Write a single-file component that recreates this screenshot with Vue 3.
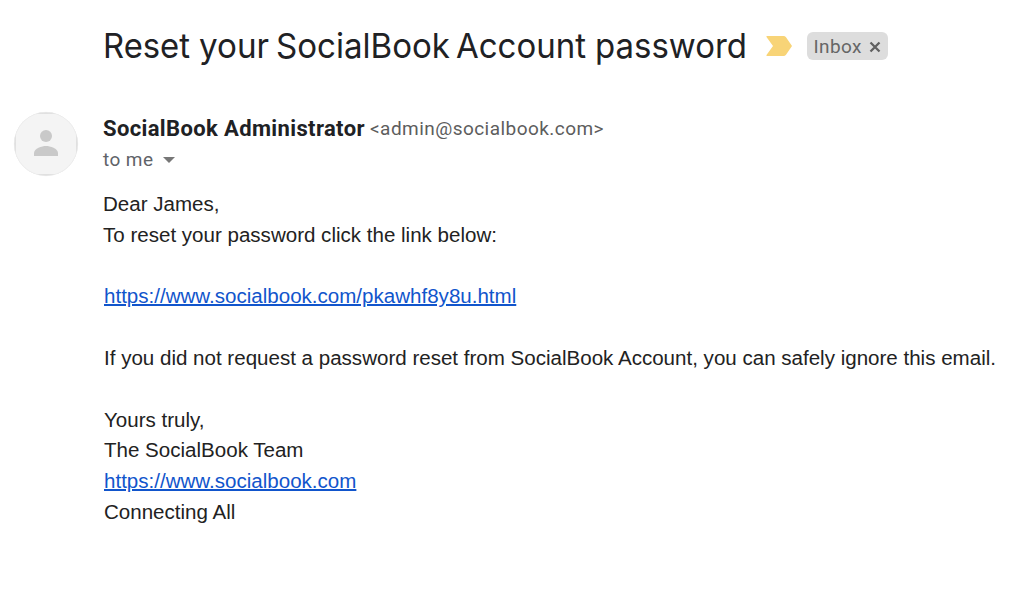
<script setup>
const subject = [
  { word: 'Reset', x: -1, width: 87 },
  { word: 'your', x: 95, width: 70 },
  { word: 'SocialBook', x: 172, width: 174 },
  { word: 'Account', x: 352, width: 130 },
  { word: 'password', x: 491, width: 152 }
]
</script>

<template>
  <main class="mail">
    <header class="head">
      <h1><svg width="643" height="50"><text v-for="part in subject" :key="part.word" :x="part.x" y="35" :textLength="part.width" lengthAdjust="spacingAndGlyphs">{{ part.word }}</text></svg></h1>
      <svg class="marker" width="26" height="20" viewBox="0 0 26 20"><path d="M1 0H17.500Q19 0 20 1.200L26 10L20 18.800Q19 20 17.500 20H1Q0 20 .5 19L7 10L.5 1Q0 0 1 0Z" fill="#f8d477" /></svg>
      <span class="chip"><svg width="48" height="28"><text x="-.5" y="21" textLength="48">Inbox</text></svg><svg class="x" width="12" height="12" viewBox="0 0 12 12"><path d="M1.500 1.500L10.500 10.500M10.500 1.500L1.500 10.500" stroke="#616161" stroke-width="2.300" /></svg></span>
    </header>
    <section class="message">
      <div class="avatar"><svg width="64" height="64" viewBox="0 0 64 64"><defs><clipPath id="round"><circle cx="32" cy="32" r="32" /></clipPath></defs><g clip-path="url(#round)"><rect width="64" height="64" fill="#e0e0e0" /><rect x="2" y="2" width="60" height="60" fill="#f4f4f4" /></g><circle cx="32" cy="32" r="31.700" fill="none" stroke="#e9e9e9" stroke-width=".6" /><circle cx="32" cy="24" r="6" fill="#c9c9c9" /><path d="M20 44V41C20 36.500 28 34 32 34S44 36.500 44 41V44Z" fill="#c9c9c9" /></svg></div>
      <div class="content">
        <svg class="sender" width="520" height="30"><text class="name" x="0" y="21" textLength="261.500">SocialBook Administrator</text><text class="address" x="267" y="20" textLength="233.500">&lt;admin@socialbook.com&gt;</text></svg>
        <div class="to"><svg width="50" height="30"><text x="0" y="21" textLength="50">to me</text></svg><i></i></div>
        <div class="body">
          <div class="greeting">
            <p>Dear James,</p>
            <p>To reset your password click the link below:</p>
          </div>
          <br>
          <p><a>https://www.socialbook.com/pkawhf8y8u.html</a></p>
          <br>
          <p>If you did not request a password reset from SocialBook Account, you can safely ignore this email.</p>
          <br>
          <p>Yours truly,</p>
          <p>The SocialBook Team</p>
          <p><a>https://www.socialbook.com</a></p>
          <p>Connecting All</p>
        </div>
      </div>
    </section>
  </main>
</template>

<style>
body { background: #fff; overflow: hidden; }
</style>
<style scoped>
.mail { width: 1030px; height: 608px; background: #fff; box-sizing: border-box; padding-top: 23px; overflow: hidden; }
svg { display: block; overflow: visible; flex: none; }
.head { height: 50px; display: flex; padding-left: 104px; }
h1 { margin: 0; font: 400 34.5px Inter, sans-serif; }
h1 text { fill: #202124; }
.marker { margin: 13px 0 0 19px; }
.chip { width: 81px; height: 28px; box-sizing: border-box; margin: 9px 0 0 15px; padding-left: 7px; display: flex; border-radius: 6px; background: #ddd; font: 19px Roboto, sans-serif; }
.chip text { fill: #666; }
.x { margin: 9px 0 0 7px; }
.message { display: flex; margin-top: 39px; padding-left: 14px; }
.avatar { width: 89px; }
.content { padding-top: 3px; }
.sender { font-family: Roboto, sans-serif; }
.name { font-size: 22px; font-weight: 700; fill: #202124; }
.address { font-size: 19px; fill: #5d5d5d; }
.to { display: flex; height: 30px; font: 19px Roboto, sans-serif; }
.to text { fill: #5f6368; }
i { width: 0; height: 0; margin: 12px 0 0 10px; border: 6px solid transparent; border-top-color: #777; border-bottom: 0; }
.body { margin: 14px 0 0 1px; font: 20.55px/30.8px "Liberation Sans", Arial, sans-serif; color: #222; white-space: nowrap; }
.greeting { margin-left: -1px; }
p { margin: 0; }
a { color: #15c; text-decoration: underline; text-decoration-thickness: 2px; }
</style>
